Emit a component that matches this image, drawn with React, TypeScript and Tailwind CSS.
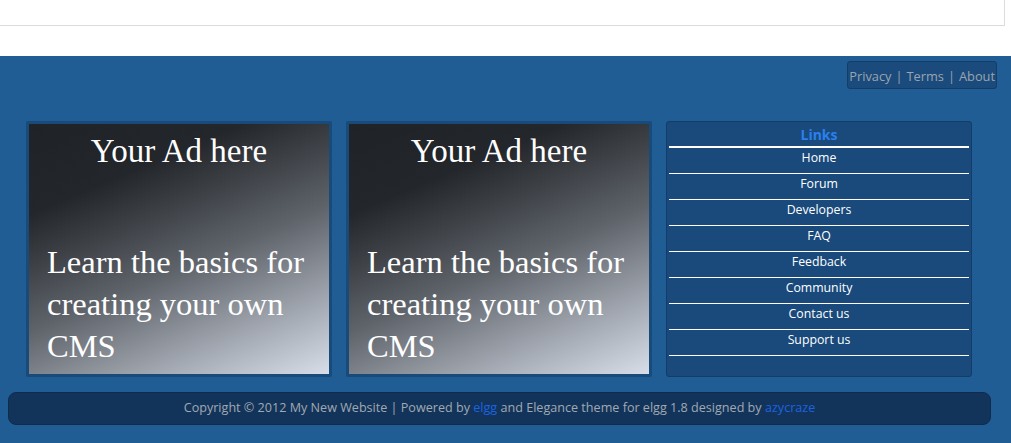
import React from "react";

const links = ["Home", "Forum", "Developers", "FAQ", "Feedback", "Community", "Contact us", "Support us"];

const AdBox: React.FC = () => (
  <div className="w-[306px] h-[256px] border-[3px] border-[#184a7a] rounded-[2px] bg-[linear-gradient(157deg,#1f2226_0%,#23262a_24%,#5e636a_55%,#d8dee9_100%)] text-white font-['Liberation_Serif',serif]">
    <div className="text-center text-[33px] leading-[40px] pt-[7px]">Your Ad here</div>
    <div className="px-[18px] pt-[70px] text-[32.5px] leading-[42px]">
      Learn the basics for creating your own CMS
    </div>
  </div>
);

const App: React.FC = () => {
  return (
    <div className="w-[1011px] h-[443px] overflow-hidden bg-white font-['Open_Sans',sans-serif]">
      <div className="w-[1005px] h-[26px] border-r border-b border-[#dcdcdc] bg-white"></div>
      <div className="mt-[30px] h-[400px] bg-[#215d95] pt-[5px]">
        <div className="flex justify-end pr-[14px]">
          <div className="h-[28px] px-[1px] pt-[3px] flex items-center rounded-[3px] border border-[#133e68] bg-[#1a4b7c] text-[12.8px] text-[#9ba4ae]">
            <span>Privacy</span>
            <span className="mx-[4px]">|</span>
            <span>Terms</span>
            <span className="mx-[4px]">|</span>
            <span>About</span>
          </div>
        </div>
        <div className="flex gap-[14px] pl-[26px] mt-[32px]">
          <AdBox />
          <AdBox />
          <div className="w-[306px] h-[256px] rounded-[3px] border border-[#123d66] bg-[#194a7b] px-[2px]">
            <div className="h-[26px] pt-[1px] flex items-center justify-center text-[14px] font-bold text-[#2a80ec] border-b-2 border-white">
              Links
            </div>
            {links.map((l) => (
              <div key={l} className="h-[26px] pb-[5px] flex items-center justify-center text-[12.3px] text-white border-b border-white">
                {l}
              </div>
            ))}
          </div>
        </div>
        <div className="mx-[8px] w-[983px] mt-[15px] h-[33px] rounded-[8px] border border-[#0f2c4e] bg-[#13345a] flex items-center justify-center text-[12.6px] text-[#a0a9b3]">
          <span>
            Copyright © 2012 My New Website | Powered by <span className="text-[#1b63e0]">elgg</span> and Elegance theme for elgg 1.8 designed by <span className="text-[#1b63e0]">azycraze</span>
          </span>
        </div>
      </div>
    </div>
  );
};

export default App;
